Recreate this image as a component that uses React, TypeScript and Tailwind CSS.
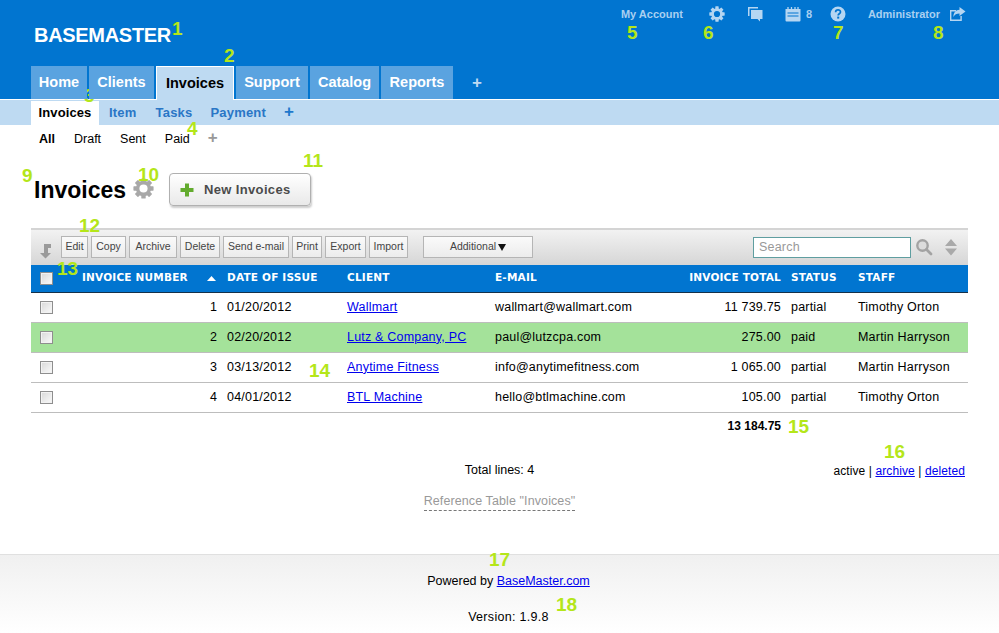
import React from "react";

const FONT = "[font-family:'Liberation_Sans',Arial,sans-serif]";

function Gear({ size, color }: { size: number; color: string }) {
  const angles = [0, 45, 90, 135, 180, 225, 270, 315];
  return (
    <svg width={size} height={size} viewBox="0 0 20 20">
      {angles.map((a) => (
        <rect key={a} x="7.9" y="0.4" width="4.2" height="5" rx="0.6" fill={color} transform={`rotate(${a} 10 10)`} />
      ))}
      <circle cx="10" cy="10" r="5.6" fill="none" stroke={color} strokeWidth="3.4" />
    </svg>
  );
}

const Tab = ({ label, w, active }: { label: string; w: string; active?: boolean }) =>
  active ? (
    <div className={`${w} h-[34px] -mb-px bg-[#bedaf2] border border-white border-b-0 text-black font-bold text-[14.5px] flex items-center justify-center`}>
      {label}
    </div>
  ) : (
    <div className={`${w} h-[33px] bg-[#5aa3e0] text-white font-bold text-[14.5px] flex items-center justify-center`}>
      {label}
    </div>
  );

const ToolBtn = ({ label, w }: { label: string; w: string }) => (
  <div className={`${w} h-[22px] border border-[#b5b5b5] bg-gradient-to-b from-[#fafafa] to-[#ececec] text-[#444] text-[10.5px] flex items-center justify-center`}>
    {label}
  </div>
);

const Check = () => (
  <div className="w-[13px] h-[13px] border border-[#8e8e8e] bg-gradient-to-br from-[#d8d8d8] to-[#fafafa] shadow-[inset_0_0_0_1px_#f2f2f2]" />
);

const Note = ({ n, x, y }: { n: string; x: string; y: string }) => (
  <span className={`absolute ${x} ${y} text-[#b4e61a] text-[19px] leading-none font-bold`}>{n}</span>
);

type Row = { n: number; date: string; client: string; email: string; total: string; status: string; staff: string; green?: boolean };
const rows: Row[] = [
  { n: 1, date: "01/20/2012", client: "Wallmart", email: "wallmart@wallmart.com", total: "11 739.75", status: "partial", staff: "Timothy Orton" },
  { n: 2, date: "02/20/2012", client: "Lutz & Company, PC", email: "paul@lutzcpa.com", total: "275.00", status: "paid", staff: "Martin Harryson", green: true },
  { n: 3, date: "03/13/2012", client: "Anytime Fitness", email: "info@anytimefitness.com", total: "1 065.00", status: "partial", staff: "Martin Harryson" },
  { n: 4, date: "04/01/2012", client: "BTL Machine", email: "hello@btlmachine.com", total: "105.00", status: "partial", staff: "Timothy Orton" },
];

const TH = "font-['DejaVu_Sans',Verdana,sans-serif] font-bold text-[10.5px] text-white text-left tracking-[0.2px] whitespace-nowrap";

export default function App() {
  return (
    <div className={`relative w-[999px] h-[633px] overflow-hidden bg-white text-black flex flex-col ${FONT}`}>
      {/* Header */}
      <header className="h-[99px] shrink-0 bg-[#0175d0] px-[31px] flex flex-col justify-end">
        <div className="flex-1 flex items-start justify-between">
          <div className="mt-[23px] ml-[3px] text-white font-bold text-[20px] leading-[24px] tracking-[-0.3px]">BASEMASTER</div>
          <div className="flex items-center mt-[6px] text-[#a9d0f0] font-bold text-[11px] mr-[2px]">
            <span>My Account</span>
            <span className="ml-[26px]"><Gear size={16} color="#b5d6f2" /></span>
            <svg className="ml-[22px]" width="16" height="16" viewBox="0 0 16 16">
              <path d="M1 1h10v1.5H2.5V10H1z" fill="#b5d6f2" />
              <path d="M4 4h11.5v9h-2.5v2.5L10.5 13H4z" fill="#b5d6f2" />
            </svg>
            <svg className="ml-[22px]" width="16" height="16" viewBox="0 0 16 16">
              <path d="M0.5 3h15v11.5a1 1 0 0 1-1 1h-13a1 1 0 0 1-1-1z" fill="#b5d6f2" />
              <path d="M3 1v3M6.5 1v3M10 1v3M13 1v3" stroke="#b5d6f2" strokeWidth="1.3" />
              <path d="M2.5 7h11M2.5 10h11" stroke="#0175d0" strokeWidth="1" />
            </svg>
            <span className="ml-[5px] w-[24px]">8</span>
            <svg className="ml-[0px]" width="16" height="16" viewBox="0 0 16 16">
              <circle cx="8" cy="8" r="7.5" fill="#b5d6f2" />
              <path d="M5.6 6.2c0-3 4.9-3 4.9-.2 0 1.8-2.3 1.7-2.3 3.4" fill="none" stroke="#0175d0" strokeWidth="1.7" />
              <rect x="7.2" y="10.6" width="2" height="2" fill="#0175d0" />
            </svg>
            <span className="ml-[22px]">Administrator</span>
            <svg className="ml-[9px]" width="17" height="16" viewBox="0 0 17 16">
              <path d="M1 4h6v1.4H2.4v8.2h9V10h1.4v5H1z" fill="#b5d6f2" />
              <path d="M10.5 1l6 4.5-6 4.5V7.4C7.5 7.4 5.6 8.4 4.4 11c0-4.5 2.5-7 6.1-7.2z" fill="#b5d6f2" />
            </svg>
          </div>
        </div>
        <nav className="flex items-end gap-[2px] relative z-10">
          <Tab label="Home" w="w-[56px]" />
          <Tab label="Clients" w="w-[65px]" />
          <Tab label="Invoices" w="w-[78px]" active />
          <Tab label="Support" w="w-[72px]" />
          <Tab label="Catalog" w="w-[69px]" />
          <Tab label="Reports" w="w-[72px]" />
          <span className="ml-[17px] mb-[6px] text-[#bedaf2] font-bold text-[17px] leading-[20px]">+</span>
        </nav>
      </header>

      {/* Subnav */}
      <div className="h-[26px] shrink-0 bg-[#bedaf2] border-t border-white pl-[31px] flex items-stretch text-[13px] font-bold text-[#2a76c6]">
        <div className="w-[68px] mt-[1px] bg-white text-black flex items-center justify-center tracking-[0.1px]">Invoices</div>
        <span className="ml-[10px] self-center tracking-[0.2px]">Item</span>
        <span className="ml-[19px] self-center tracking-[0.2px]">Tasks</span>
        <span className="ml-[18px] self-center tracking-[0.2px]">Payment</span>
        <span className="ml-[18px] self-center text-[17px] leading-[20px] font-bold text-[#1f78cc] -mt-[2px]">+</span>
      </div>

      {/* Filter row */}
      <div className="h-[28px] shrink-0 pl-[39px] flex items-center text-[12.5px] text-black">
        <b className="font-bold">All</b>
        <span className="ml-[19px]">Draft</span>
        <span className="ml-[19px]">Sent</span>
        <span className="ml-[19px]">Paid</span>
        <span className="ml-[18px] -mt-[2px] text-[17px] leading-[20px] font-bold text-[#999]">+</span>
      </div>

      {/* Title */}
      <div className="h-[52px] shrink-0 pl-[34px] pt-[20px] flex items-start">
        <h1 className="text-[23px] font-bold leading-[30px] mt-[2px]">Invoices</h1>
        <span className="ml-[7px] mt-[5px]"><Gear size={21} color="#a8a8a8" /></span>
        <div className="ml-[15px] w-[142px] h-[33px] rounded-[4px] border border-[#b0b0b0] bg-gradient-to-b from-white to-[#e9e9e9] shadow-[1px_2px_2px_rgba(0,0,0,0.2)] flex items-center pl-[10px] text-[13px] font-bold text-[#4b4b4b] tracking-[0.35px]">
          <svg width="14" height="14" viewBox="0 0 14 14" className="mr-[10px]">
            <path d="M5 0.5h4v4.5h4.5v4H9v4.5H5V9H0.5V5H5z" fill="#63ab2e" />
          </svg>
          New Invoices
        </div>
      </div>

      {/* Table area */}
      <main className="mx-[31px] mt-[23px] shrink-0">
        <div className="h-[37px] border-t-2 border-[#d4d4d4] bg-gradient-to-b from-[#f2f2f2] to-[#d6d6d6] flex items-center pl-[8px]">
          <svg width="14" height="16" viewBox="0 0 14 16" className="mt-[7px]">
            <path d="M6 1h7v4H10v5h3l-5.5 5.5L2 10h4z" fill="#9a9a9a" transform="translate(-1 0)" />
          </svg>
          <div className="ml-[8px] flex gap-[3px] -mt-[1px]">
            <ToolBtn label="Edit" w="w-[27px]" />
            <ToolBtn label="Copy" w="w-[35px]" />
            <ToolBtn label="Archive" w="w-[48px]" />
            <ToolBtn label="Delete" w="w-[40px]" />
            <ToolBtn label="Send e-mail" w="w-[66px]" />
            <ToolBtn label="Print" w="w-[30px]" />
            <ToolBtn label="Export" w="w-[41px]" />
            <ToolBtn label="Import" w="w-[39px]" />
            <div className="ml-[12px] w-[110px] h-[22px] border border-[#b5b5b5] bg-gradient-to-b from-[#fafafa] to-[#ececec] text-[#444] text-[10.5px] flex items-center justify-center">
              Additional
              <svg width="8" height="7" viewBox="0 0 8 7" className="ml-[2px]"><path d="M0 0h8L4 7z" fill="#111" /></svg>
            </div>
          </div>
          <div className="ml-auto flex items-center -mt-[1px]">
            <div className="w-[158px] h-[21px] border border-[#5f9ea0] bg-white pl-[5px] text-[12.5px] text-[#999] flex items-center tracking-[0.2px]">Search</div>
            <svg width="18" height="18" viewBox="0 0 18 18" className="ml-[4px]">
              <circle cx="7.5" cy="7.5" r="5.2" fill="#dcdcdc" stroke="#a3a3a3" strokeWidth="2.4" />
              <path d="M11.5 11.5L16 16" stroke="#a3a3a3" strokeWidth="2.8" strokeLinecap="round" />
            </svg>
            <svg width="14" height="18" viewBox="0 0 14 18" className="ml-[11px] mr-[10px]">
              <path d="M7 1l6 7H1zM1 10.5h12l-6 7z" fill="#a9a9a9" />
            </svg>
          </div>
        </div>

        <table className="w-full table-fixed border-collapse text-[12.5px]">
          <colgroup>
            <col className="w-[44px]" />
            <col className="w-[145px]" />
            <col className="w-[120px]" />
            <col className="w-[148px]" />
            <col className="w-[152px]" />
            <col className="w-[144px]" />
            <col className="w-[67px]" />
            <col />
          </colgroup>
          <thead>
            <tr className="h-[27px] bg-[#0175d0] border-b border-[#15314a]">
              <th className="pl-[9px] text-left"><Check /></th>
              <th className={`${TH} pl-[7px]`}>
                <span className="flex items-center justify-between pr-[4px]">
                  INVOICE NUMBER
                  <svg width="9" height="5" viewBox="0 0 9 5" className="mr-[0px]"><path d="M4.5 0L9 5H0z" fill="#fff" /></svg>
                </span>
              </th>
              <th className={`${TH} pl-[7px]`}>DATE OF ISSUE</th>
              <th className={`${TH} pl-[7px]`}>CLIENT</th>
              <th className={`${TH} pl-[7px]`}>E-MAIL</th>
              <th className={`${TH} !text-right pr-[3px]`}>INVOICE TOTAL</th>
              <th className={`${TH} pl-[7px]`}>STATUS</th>
              <th className={`${TH} pl-[7px]`}>STAFF</th>
            </tr>
          </thead>
          <tbody>
            {rows.map((r) => (
              <tr key={r.n} className={`h-[30px] border-b border-[#bdbdbd] ${r.green ? "bg-[#a4e29a]" : ""}`}>
                <td className="pl-[9px]"><Check /></td>
                <td className="text-right pr-[3px]">{r.n}</td>
                <td className="pl-[7px] tracking-[0.2px]">{r.date}</td>
                <td className="pl-[7px] tracking-[0.2px]"><a className="text-[#0000ee] underline">{r.client}</a></td>
                <td className="pl-[7px] tracking-[0.2px] whitespace-nowrap">{r.email}</td>
                <td className="text-right pr-[3px] tracking-[0.2px]">{r.total}</td>
                <td className="pl-[7px] tracking-[0.2px]">{r.status}</td>
                <td className="pl-[7px] tracking-[0.2px] whitespace-nowrap">{r.staff}</td>
              </tr>
            ))}
          </tbody>
        </table>

        <div className="h-[27px] pr-[187px] flex items-center justify-end text-[12px] font-bold">13 184.75</div>

        <div className="relative h-[30px] mt-[16px] flex items-center justify-center text-[12.5px]">
          <span>Total lines: 4</span>
          <span className="absolute right-[3px] text-[12px] tracking-[0.1px]">
            active | <a className="text-[#0000ee] underline">archive</a> | <a className="text-[#0000ee] underline">deleted</a>
          </span>
        </div>

        <div className="mt-[7px] flex justify-center">
          <span className="text-[12.5px] text-[#999] border-b border-dashed border-[#777] leading-[17px] tracking-[0.1px]">Reference Table "Invoices"</span>
        </div>
      </main>

      {/* Footer */}
      <footer className="mt-auto h-[79px] shrink-0 border-t border-[#e0e0e0] bg-gradient-to-b from-[#f0f0f0] to-white flex flex-col items-center pl-[18px] pt-[17px] text-[12.5px]">
        <div>Powered by <a className="text-[#0000ee] underline">BaseMaster.com</a></div>
        <div className="mt-[17px] tracking-[0.3px]">Version: 1.9.8</div>
      </footer>

      {/* Numbered annotations */}
      <Note n="1" x="left-[172px]" y="top-[19px]" />
      <Note n="2" x="left-[224px]" y="top-[46px]" />
      <Note n="3" x="left-[84px]" y="top-[86px]" />
      <Note n="4" x="left-[187px]" y="top-[119px]" />
      <Note n="5" x="left-[627px]" y="top-[23px]" />
      <Note n="6" x="left-[703px]" y="top-[23px]" />
      <Note n="7" x="left-[833px]" y="top-[23px]" />
      <Note n="8" x="left-[933px]" y="top-[23px]" />
      <Note n="9" x="left-[22px]" y="top-[166px]" />
      <Note n="10" x="left-[138px]" y="top-[165px]" />
      <Note n="11" x="left-[303px]" y="top-[151px]" />
      <Note n="12" x="left-[79px]" y="top-[216px]" />
      <Note n="13" x="left-[57px]" y="top-[259px]" />
      <Note n="14" x="left-[309px]" y="top-[361px]" />
      <Note n="15" x="left-[788px]" y="top-[417px]" />
      <Note n="16" x="left-[884px]" y="top-[442px]" />
      <Note n="17" x="left-[489px]" y="top-[550px]" />
      <Note n="18" x="left-[556px]" y="top-[595px]" />
    </div>
  );
}
